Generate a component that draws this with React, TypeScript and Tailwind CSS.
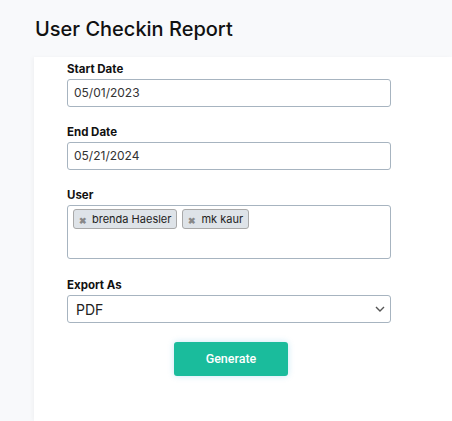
import React from "react";

const font = { fontFamily: "Inter, 'Noto Sans', sans-serif" };

function Label({ children }: { children: React.ReactNode }) {
  return <div className="text-[11.5px] font-bold text-[#111] leading-[14px] mb-[3px]">{children}</div>;
}

function Tag({ text }: { text: string }) {
  return (
    <div className="flex items-center h-[20px] px-[5px] gap-[5px] bg-[#dee3e8] border border-[#a9a9a9] rounded-[3px] text-[11px] text-[#222]">
      <span className="text-[#888] text-[9px] font-bold leading-none mt-[2px]">✖</span>
      <span className="leading-none">{text}</span>
    </div>
  );
}

export default function App() {
  return (
    <div className="w-[452px] h-[421px] bg-[#f8f9fb] overflow-hidden flex flex-col" style={font}>
      <div className="h-[57px] flex items-start pl-[35px] pt-[16px]">
        <h1 className="text-[20px] font-medium text-[#111] leading-[26px]">User Checkin Report</h1>
      </div>
      <div className="flex-1 ml-[34px] bg-white shadow-[-2px_0_4px_rgba(0,0,0,0.03)] pt-[5px] pl-[33px]">
        <div className="w-[324px] flex flex-col">
          <Label>Start Date</Label>
          <div className="h-[28px] border border-[#a7b4c0] rounded-[3px] flex items-center px-[6px] text-[12px] text-[#333]">05/01/2023</div>
          <div className="h-[18px]" />
          <Label>End Date</Label>
          <div className="h-[28px] border border-[#a7b4c0] rounded-[3px] flex items-center px-[6px] text-[12px] text-[#333]">05/21/2024</div>
          <div className="h-[18px]" />
          <Label>User</Label>
          <div className="h-[54px] border border-[#a7b4c0] rounded-[3px] flex items-start gap-[5px] px-[5px] pt-[3px]">
            <Tag text="brenda Haesler" />
            <Tag text="mk kaur" />
          </div>
          <div className="h-[19px]" />
          <Label>Export As</Label>
          <div className="h-[28px] border border-[#a7b4c0] rounded-[3px] flex items-center justify-between pl-[8px] pr-[5px] text-[14px] text-[#222]">
            <span>PDF</span>
            <svg width="10" height="6" viewBox="0 0 10 6" fill="none" stroke="#555" strokeWidth="1.4">
              <path d="M1 1l4 4 4-4" />
            </svg>
          </div>
          <div className="flex justify-center mt-[19px] pl-[4px]">
            <button className="w-[114px] h-[34px] bg-[#1abc9c] rounded-[3px] text-white text-[12.5px] font-medium shadow-[0_0_6px_rgba(26,160,220,0.25)]" style={{ fontFamily: "Roboto, sans-serif" }}>
              Generate
            </button>
          </div>
        </div>
      </div>
    </div>
  );
}
